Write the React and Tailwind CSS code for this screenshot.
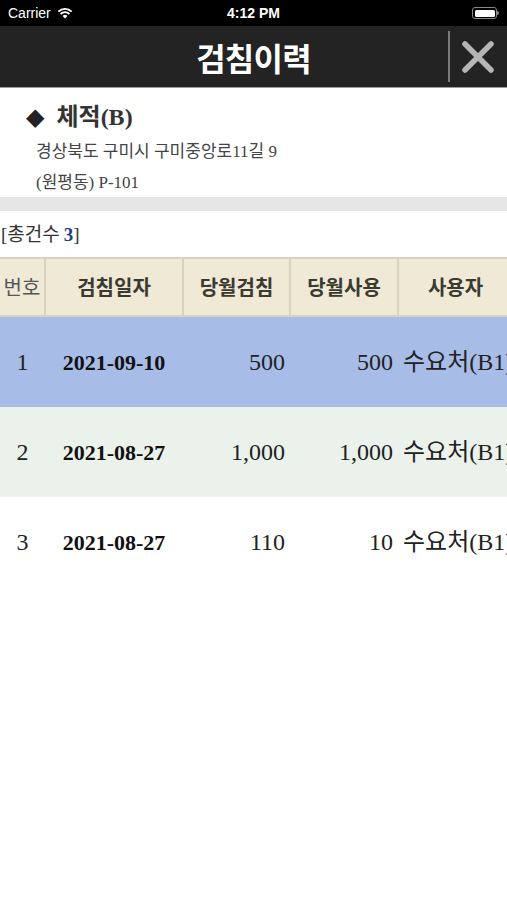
import React from 'react';

const rows = [
  { no: '1', date: '2021-09-10', read: '500', use: '500', user: '수요처(B1)', bg: 'bg-[#a7bde8]' },
  { no: '2', date: '2021-08-27', read: '1,000', use: '1,000', user: '수요처(B1)', bg: 'bg-[#ebf2ec]' },
  { no: '3', date: '2021-08-27', read: '110', use: '10', user: '수요처(B1)', bg: 'bg-white' },
];

const cols = 'grid grid-cols-[45px_138px_107px_108px_114px]';

export default function App() {
  return (
    <div className="w-[507px] h-[900px] overflow-hidden bg-white font-['Liberation_Serif','Noto_Sans_CJK_KR',serif]">
      {/* status bar */}
      <div className="h-[26px] bg-black text-white flex items-center justify-between px-2 relative font-['Liberation_Sans',sans-serif] text-[14px]">
        <div className="flex items-center gap-1.5">
          <span>Carrier</span>
          <svg width="16" height="12" viewBox="0 0 16 12">
            <path d="M8 11.5 L5.6 9 A3.4 3.4 0 0 1 10.4 9 Z" fill="white" />
            <path d="M3.6 7 A6.2 6.2 0 0 1 12.4 7" stroke="white" strokeWidth="1.8" fill="none" />
            <path d="M1.3 4.6 A9.4 9.4 0 0 1 14.7 4.6" stroke="white" strokeWidth="1.8" fill="none" />
          </svg>
        </div>
        <span className="absolute left-1/2 -translate-x-1/2 font-bold">4:12 PM</span>
        <div className="flex items-center">
          <div className="w-[25px] h-[12px] rounded-[3px] border border-[#888] p-[1.5px]">
            <div className="w-full h-full bg-white rounded-[1.5px]" />
          </div>
          <div className="w-[2px] h-[4px] bg-[#888] rounded-r-sm" />
        </div>
      </div>

      {/* nav */}
      <div className="h-[62px] bg-[#232323] border-b border-[#9a9a9a] relative flex items-center justify-center">
        <span className="text-white text-[32px] font-bold font-['Noto_Sans_CJK_KR',sans-serif] tracking-tight">검침이력</span>
        <div className="absolute right-[57px] top-[5px] bottom-[5px] w-[2px] bg-[#7a7a7a]" />
        <svg className="absolute right-[13px] top-[15px]" width="32" height="32" viewBox="0 0 32 32">
          <path d="M3 3 L29 29 M29 3 L3 29" stroke="#b5b5b5" strokeWidth="5.5" strokeLinecap="round" />
        </svg>
      </div>

      {/* info */}
      <div className="h-[109px] pt-[13px] pl-[26px]">
        <div className="flex items-center gap-[12px] h-[32px]">
          <span className="text-[24px] leading-none text-[#222] font-['DejaVu_Sans',sans-serif]">◆</span>
          <span className="text-[24px] font-bold text-[#333]">체적(B)</span>
        </div>
        <div className="pl-[10px] mt-[3px] text-[17px] leading-[31px] text-[#444]">
          <div>경상북도 구미시 구미중앙로11길 9</div>
          <div>(원평동) P-101</div>
        </div>
      </div>
      <div className="h-[14px] bg-[#e6e6e6]" />

      {/* count */}
      <div className="h-[46px] flex items-center pl-[1px] pt-[3px] text-[19px] text-[#333]">
        [총건수 <span className="font-bold text-[#1d3f8a] ml-[4px]">3</span>]
      </div>

      {/* table */}
      <div className="w-[512px]">
        <div className={`${cols} h-[60px] bg-[#efe9d5] border-y-2 border-[#d9d2bc] text-[20px] text-[#3b3a30] font-['Noto_Sans_CJK_KR',sans-serif]`}>
          <div className="flex items-center justify-center border-r border-[#d9d2bc] font-normal text-[#555]">번호</div>
          <div className="flex items-center justify-center border-x border-[#d9d2bc] font-bold">검침일자</div>
          <div className="flex items-center justify-center border-x border-[#d9d2bc] font-bold">당월검침</div>
          <div className="flex items-center justify-center border-x border-[#d9d2bc] font-bold">당월사용</div>
          <div className="flex items-center justify-center border-l border-[#d9d2bc] font-bold">사용자</div>
        </div>
        {rows.map((r) => (
          <div key={r.no} className={`${cols} h-[90px] ${r.bg} text-[24px] text-[#222]`}>
            <div className="flex items-center justify-center">{r.no}</div>
            <div className="flex items-center justify-center font-bold text-[22px] text-[#111]">{r.date}</div>
            <div className="flex items-center justify-end pr-[5px]">{r.read}</div>
            <div className="flex items-center justify-end pr-[5px]">{r.use}</div>
            <div className="flex items-center pl-[5px] whitespace-nowrap">{r.user}</div>
          </div>
        ))}
      </div>
    </div>
  );
}
